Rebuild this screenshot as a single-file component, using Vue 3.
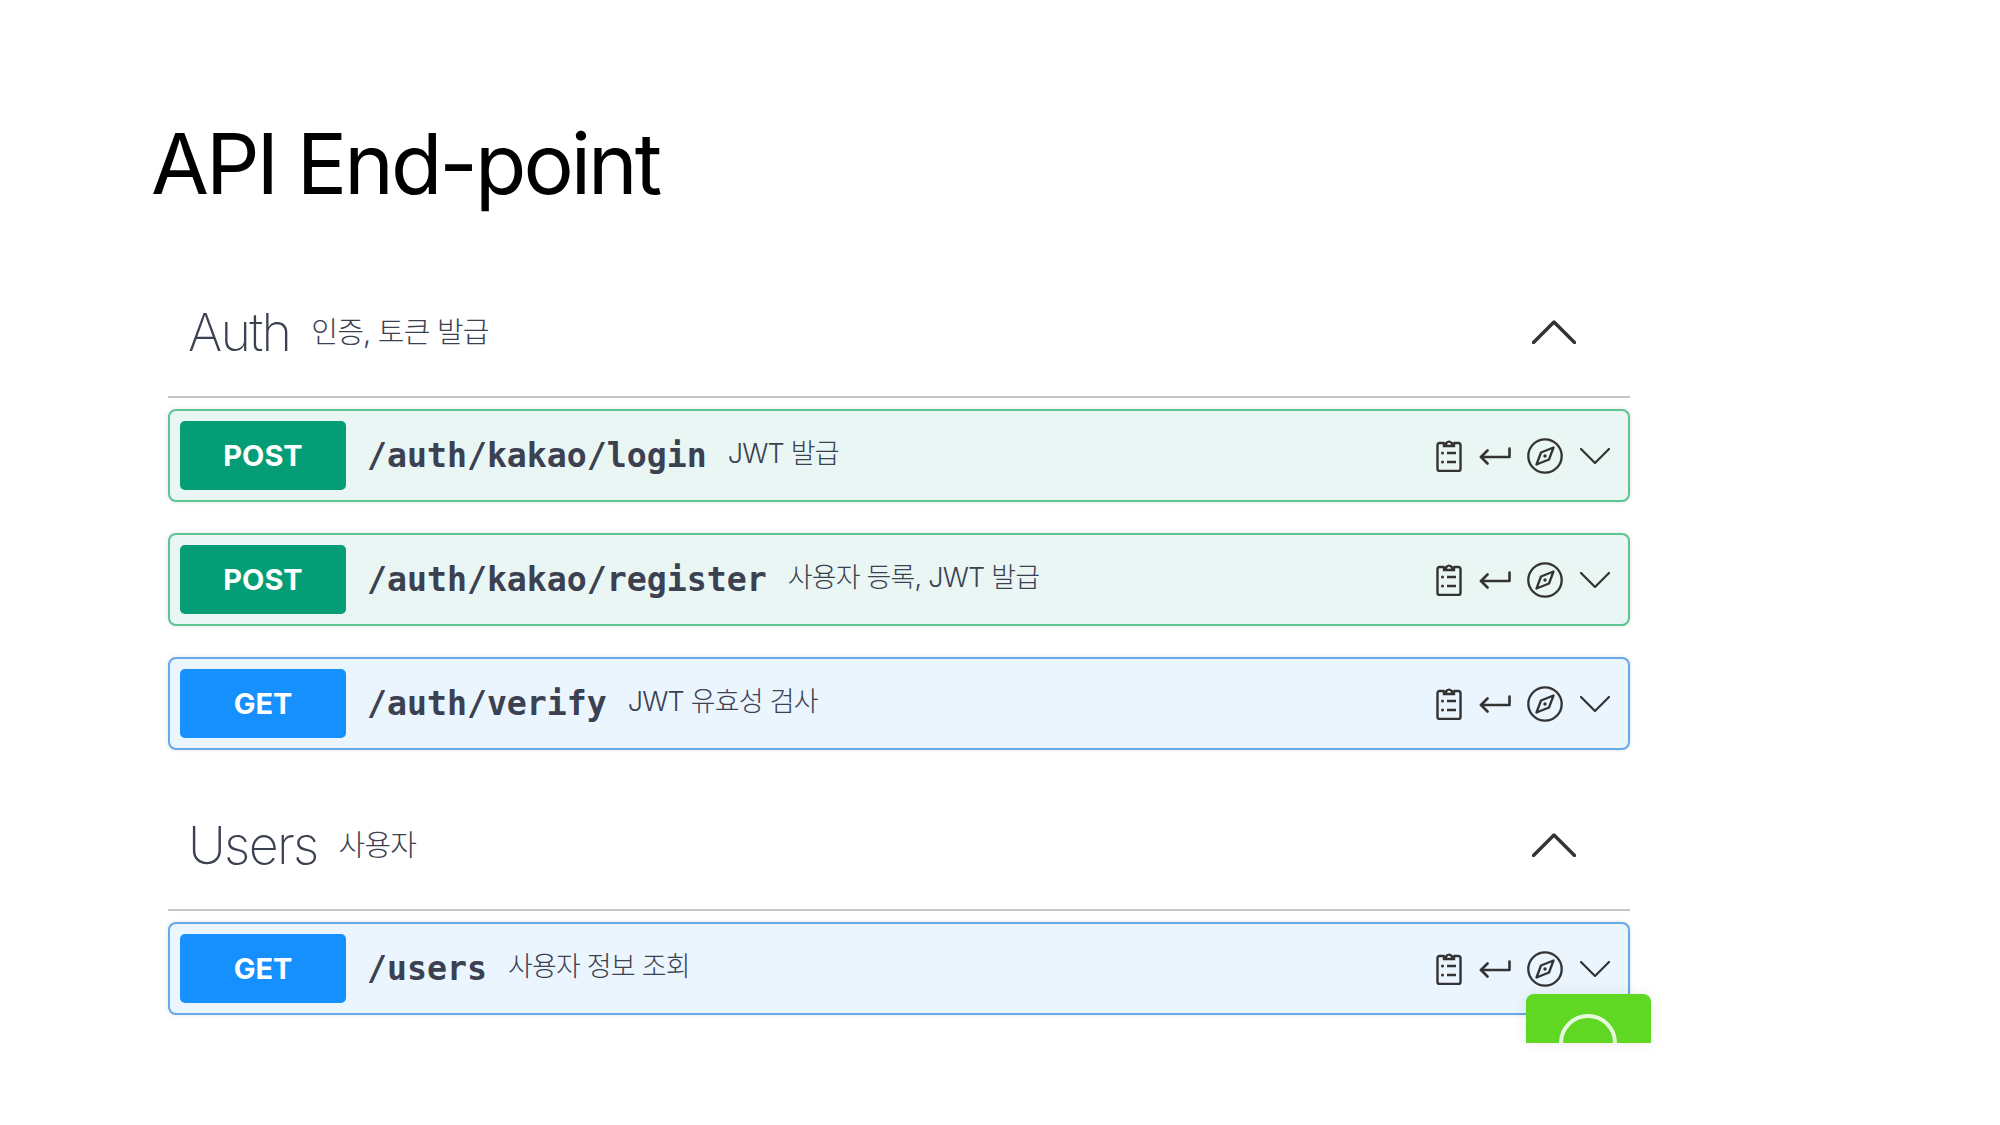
<template>
  <div class="page">
    <h1 class="title">API End-point</h1>

    <section v-for="group in groups" :key="group.name" class="group">
      <div class="group-head">
        <div class="group-text">
          <span class="group-name">{{ group.name }}</span>
          <span class="group-desc">{{ group.desc }}</span>
        </div>
        <svg class="head-chevron" viewBox="0 0 44 24" fill="none">
          <path d="M1.500 22.500 22 2l20.500 20.500" stroke="#333" stroke-width="3.400" stroke-linecap="round" stroke-linejoin="round" />
        </svg>
      </div>

      <div
        v-for="op in group.ops"
        :key="op.path"
        class="row"
        :class="op.method === 'POST' ? 'row-post' : 'row-get'"
      >
        <span class="badge">{{ op.method }}</span>
        <span class="path">{{ op.path }}</span>
        <span class="desc">{{ op.desc }}</span>
        <div class="actions">
          <!-- 복사 -->
          <svg class="ic-clip" viewBox="0 0 26 34" fill="none" stroke="#333" stroke-width="2.400">
            <path d="M8 5H3.500A2 2 0 0 0 1.500 7v24a2 2 0 0 0 2 2h19a2 2 0 0 0 2-2V7a2 2 0 0 0-2-2H18" />
            <path d="M8 8V5.500h2.200a3 3 0 0 1 5.600 0H18V8z" />
            <path d="M11 15h9M11 24h9" />
            <circle cx="6.500" cy="15" r="1.500" fill="#333" stroke="none" />
            <circle cx="6.500" cy="24" r="1.500" fill="#333" stroke="none" />
          </svg>
          <svg class="ic-enter" viewBox="0 0 32 18" fill="none" stroke="#333" stroke-width="2.600" stroke-linecap="round" stroke-linejoin="round">
            <path d="M30.500 1.500V10H2" />
            <path d="M8.500 3.500 2 10l6.500 6.500" />
          </svg>
          <svg class="ic-compass" viewBox="0 0 36 36" fill="none" stroke="#333" stroke-width="2.300">
            <circle cx="18" cy="18" r="16.700" />
            <path d="M26.500 9.500 22 21.500 9.500 26.500 14 14.500z" stroke-linejoin="round" />
            <circle cx="18" cy="18" r="1.700" fill="#333" stroke="none" />
          </svg>
          <svg class="ic-chevron" viewBox="0 0 30 16" fill="none" stroke="#333" stroke-width="2.200" stroke-linecap="round" stroke-linejoin="round">
            <path d="M1 1l14 14L29 1" />
          </svg>
        </div>
      </div>
    </section>

    <div class="chat-btn"><span class="chat-ring"></span></div>
  </div>
</template>

<script setup>
const groups = [
  {
    name: 'Auth',
    desc: '인증, 토큰 발급',
    ops: [
      { method: 'POST', path: '/auth/kakao/login', desc: 'JWT 발급' },
      { method: 'POST', path: '/auth/kakao/register', desc: '사용자 등록, JWT 발급' },
      { method: 'GET', path: '/auth/verify', desc: 'JWT 유효성 검사' }
    ]
  },
  {
    name: 'Users',
    desc: '사용자',
    ops: [{ method: 'GET', path: '/users', desc: '사용자 정보 조회' }]
  }
]
</script>

<style>
html, body {
  background: #fff;
}
</style>

<style scoped>
.page {
  position: relative;
  width: 1462px;
  height: 1125px;
  margin-left: 168px;
  font-family: Inter, "Noto Sans CJK KR", sans-serif;
  color: #3b4151;
}

.title {
  margin: 0 0 0 -17px;
  padding-top: 114px;
  height: 122px;
  font-size: 84px;
  line-height: 100px;
  font-weight: 400;
  color: #000;
  letter-spacing: -3px;
}

.group-head {
  display: flex;
  align-items: center;
  justify-content: space-between;
  height: 80px;
  padding: 0 54px 24px 20px;
  margin-top: 56px;
  border-bottom: 2px solid #c6c6c6;
}

.group + .group .group-head {
  margin-top: 55px;
}

.group-text {
  display: flex;
  align-items: center;
  gap: 21px;
}

.group-name {
  font-size: 52px;
  font-weight: 200;
  letter-spacing: -1.700px;
}

.group-desc {
  font-size: 29px;
  font-family: Inter, "Noto Sans CJK KR", sans-serif;
  font-weight: 300;
  letter-spacing: -0.800px;
  line-height: 1;
}

.head-chevron {
  width: 44px;
  height: 24px;
}

.row {
  display: flex;
  align-items: center;
  height: 93px;
  box-sizing: border-box;
  margin: 11px 0 31px;
  padding: 0 18px 0 10px;
  border: 2px solid;
  border-radius: 8px;
  box-shadow: 0 0 4px rgba(0, 0, 0, 0.12);
}

.row + .row {
  margin-top: 0;
}

.row-post {
  background: #e9f6f3;
  border-color: #5cc593;
}

.row-get {
  background: #ebf5fe;
  border-color: #66a8e8;
}

.badge {
  flex: none;
  width: 166px;
  height: 69px;
  line-height: 69px;
  border-radius: 5px;
  text-align: center;
  color: #fff;
  font-size: 29px;
  font-weight: 700;
}

.row-post .badge {
  background: #049d75;
}

.row-get .badge {
  background: #1690ff;
}

.path {
  margin-left: 21px;
  font-family: "DejaVu Sans Mono", monospace;
  font-size: 33.200px;
  font-weight: 700;
}

.desc {
  margin: -2px 0 0 21px;
  font-size: 27px;
  font-family: Inter, "Noto Sans CJK KR", sans-serif;
  font-weight: 300;
  letter-spacing: -0.800px;
  line-height: 1.2;
}

.actions {
  display: flex;
  align-items: center;
  margin-left: auto;
}

.ic-clip {
  width: 26px;
  height: 34px;
  margin-top: -1px;
}

.ic-enter {
  width: 32px;
  height: 18px;
  margin-left: 17px;
}

.ic-compass {
  width: 36px;
  height: 36px;
  margin-left: 16px;
}

.ic-chevron {
  width: 30px;
  height: 16px;
  margin-left: 17px;
}

/* 채팅 버튼, 하단이 잘려 있음 */
.chat-btn {
  position: absolute;
  left: 1358px;
  top: 994px;
  width: 125px;
  height: 49px;
  background: #5fd723;
  border-radius: 8px 8px 0 0;
  overflow: hidden;
  box-shadow: 0 0 14px rgba(0, 0, 0, 0.08);
}

.chat-ring {
  position: absolute;
  left: 33px;
  top: 20px;
  width: 58px;
  height: 58px;
  box-sizing: border-box;
  border: 4px solid #e6f8dc;
  border-radius: 50%;
}
</style>
